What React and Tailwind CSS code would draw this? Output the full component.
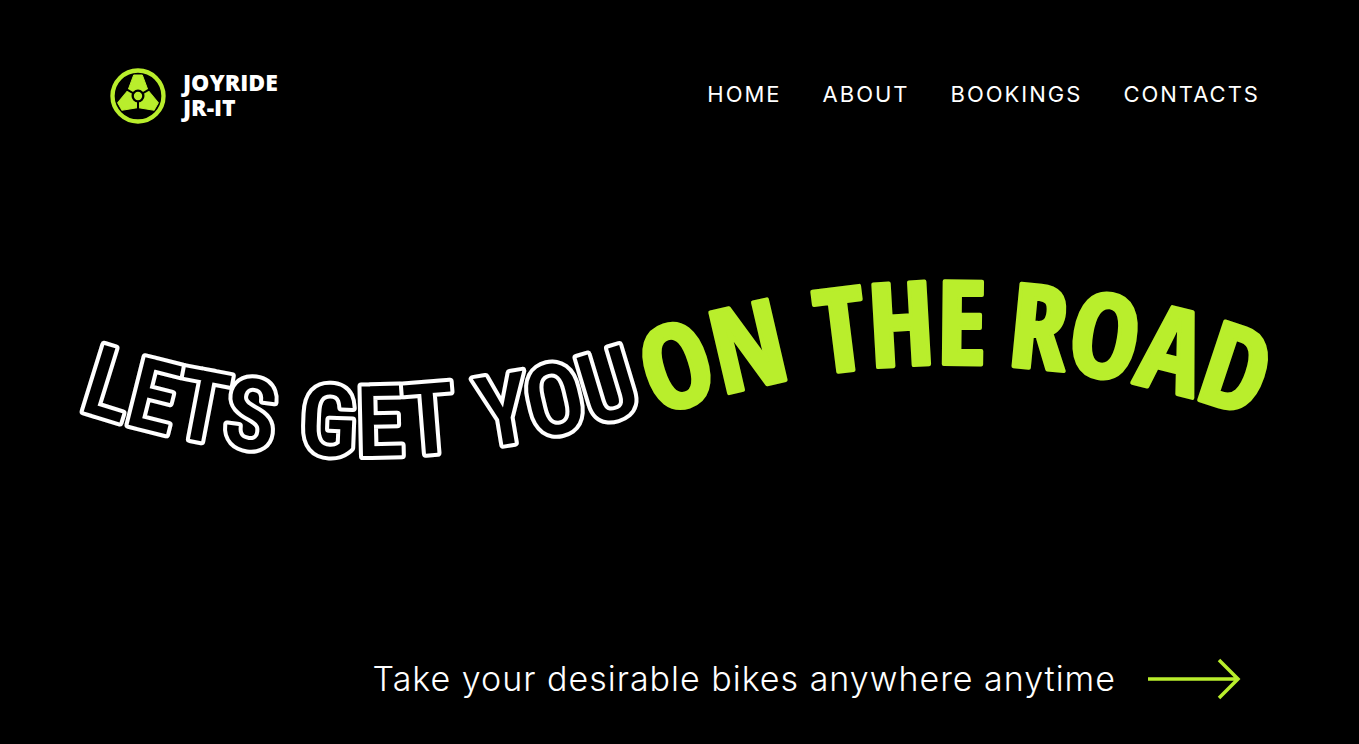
const links = [
  { label: "HOME", href: "#home" },
  { label: "ABOUT", href: "#about" },
  { label: "BOOKINGS", href: "#bookings" },
  { label: "CONTACTS", href: "#contacts" },
];

const outlined = [
  { word: "LETS", at: 127 },
  { word: "GET", at: 333 },
  { word: "YOU", at: 521 },
];

const filled = [
  { word: "ON", at: 97 },
  { word: "THE", at: 279 },
  { word: "ROAD", at: 509 },
];

const blade = "M-13 -63 H13 L29 -20 L14 -11 H-14 L-29 -20 Z";

function Logo() {
  return (
    <svg viewBox="-84 -84 168 168" className="size-14 shrink-0" aria-hidden="true">
      <circle r="76.500" fill="none" stroke="#b9ee2c" strokeWidth="13" />
      <g fill="#b9ee2c" stroke="#b9ee2c" strokeWidth="3" strokeLinejoin="round">
        <path d={blade} />
        <path d={blade} transform="rotate(120)" />
        <path d={blade} transform="rotate(240)" />
      </g>
      <g stroke="#000" strokeWidth="6">
        <path d="M0 0 V44" />
        <path d="M0 0 V44" transform="rotate(120)" />
        <path d="M0 0 V44" transform="rotate(240)" />
      </g>
      <circle r="16" fill="#b9ee2c" stroke="#000" strokeWidth="7" />
    </svg>
  );
}

function Headline() {
  return (
    <h1>
      <svg viewBox="0 240 1359 240" className="block w-full font-['Roboto_Condensed','Liberation_Sans',sans-serif]">
        <defs>
          <path id="valley" d="M52 400 A887 887 0 0 0 672 400" />
          <path id="hill" d="M632 426 A860 860 0 0 1 1272 426" />
        </defs>
        <g className="fill-black stroke-white stroke-8 text-[98px] font-medium [paint-order:stroke]" strokeLinejoin="round" textAnchor="middle">
          {outlined.map(({ word, at }) => (
            <text key={word}>
              <textPath href="#valley" startOffset={at}>{word}</textPath>
            </text>
          ))}
        </g>
        <g className="fill-[#b9ee2c] stroke-[#b9ee2c] stroke-4 font-['Open_Sans_Condensed','Liberation_Sans',sans-serif] text-[116px] font-bold" strokeLinejoin="round" textAnchor="middle">
          {filled.map(({ word, at }) => (
            <text key={word}>
              <textPath href="#hill" startOffset={at}>{word}</textPath>
            </text>
          ))}
        </g>
      </svg>
    </h1>
  );
}

export default function App() {
  return (
    <div className="min-h-screen bg-black text-white">
      <header className="flex items-center justify-between pt-[68px] pr-[99px] pl-[110px]">
        <a href="#home" className="flex items-center gap-[17px]">
          <Logo />
          <span className="pb-[3px] font-['Open_Sans',sans-serif] text-[23px] leading-[25px] font-extrabold">
            JOYRIDE
            <br />
            JR-IT
          </span>
        </a>
        <nav className="flex gap-[41px] pb-1 font-['Inter',sans-serif] text-[22px] tracking-[2px]">
          {links.map(({ label, href }) => (
            <a key={label} href={href}>{label}</a>
          ))}
        </nav>
      </header>
      <main>
        <div className="mt-[116px]">
          <Headline />
        </div>
        <a href="#bookings" className="mt-[175px] mr-[118px] flex items-center justify-end gap-[32px] font-['Inter',sans-serif] text-[34px] leading-[48px] font-light tracking-[1px]">
          Take your desirable bikes anywhere anytime
          <svg viewBox="0 0 93 42" className="h-[42px] w-[93px] shrink-0" fill="none" stroke="#b9ee2c" strokeWidth="3.500" aria-hidden="true">
            <path d="M0 21 H90 M71 2 L90 21 L71 40" />
          </svg>
        </a>
      </main>
    </div>
  );
}
